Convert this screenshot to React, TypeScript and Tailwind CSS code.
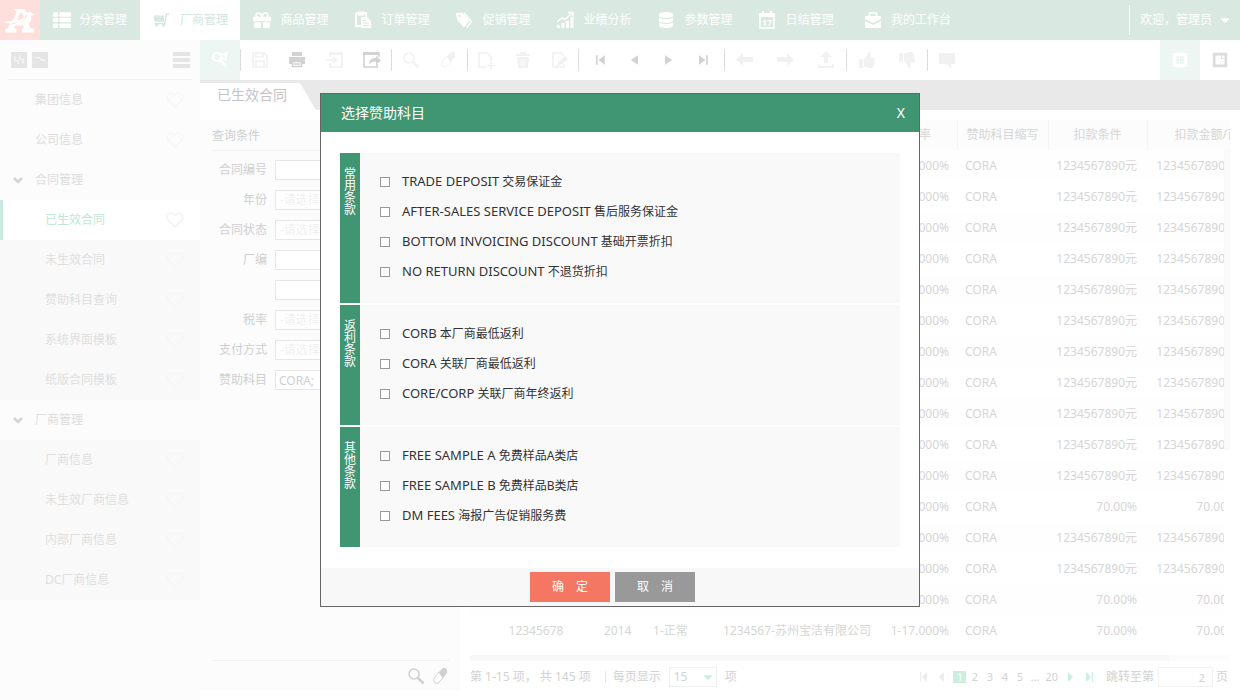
import type { ReactNode } from "react";
import { FaCaretDown, FaDatabase, FaGift, FaThList, FaThumbsDown, FaThumbsUp } from "react-icons/fa";
import { FiHeart } from "react-icons/fi";

const Svg = ({ size = "size-5", children }: { size?: string; children: ReactNode }) => (
  <svg viewBox="0 0 20 20" className={`${size} shrink-0`} fill="currentColor" aria-hidden="true">
    {children}
  </svg>
);

const Bird = () => (
  <svg viewBox="0 0 32 28" className="h-7 w-8" aria-hidden="true">
    <path
      fill="#fff"
      d="M10 3h11l1.500 4 3.500-1 5 2.500-4 1.500c1 3 0 6-2.500 7.500l2.500 5h3v4h-12v-4h2l-1-3.500c-3 1-6 .5-8 .5l-1 3h2.500v4h-11v-4h2.500l2-5c-2 0-4-.5-5-2 3 .5 6 0 8.500-2l3.500-8.500h-2.500z"
    />
    <path fill="#ffdfdc" d="M16 7h2.500l1.500 4-2.500 2.500-4.500.5z" />
    <path d="M22 8c1 3-1 6-5 8.500M13 16c-2 1.500-4 2-6 2" fill="none" stroke="#ffdfdc" strokeWidth="1" />
  </svg>
);

const Cart = () => (
  <Svg size="size-[18px]">
    <path d="M2 5h11v7H3z" />
    <path d="M19 3.500h-3l-2 10.500H3" fill="none" stroke="currentColor" strokeWidth="1.500" />
    <path d="M4 6.500h7M5 10h5" stroke="#fff" strokeWidth=".6" />
    <circle cx="5" cy="15.500" r="1.700" />
    <circle cx="13" cy="15.500" r="1.700" />
  </Svg>
);
const Clipboard = () => (
  <Svg>
    <path d="M3 3h10v4M8 16H3V3" fill="none" stroke="currentColor" strokeWidth="2" />
    <path d="M5 1.500h6v4H5zM8 7h6l4 4v7H8z" />
    <path d="M10 10.500h3M10 13h6M10 15.500h6" stroke="#d9e9e2" strokeWidth="1" />
  </Svg>
);
const Tag = () => (
  <Svg>
    <path d="M2 3l6-.5 7.500 8-5.500 7L3 9.500z" />
    <path d="M10 3l7.500 8.500-5 6" fill="none" stroke="currentColor" strokeWidth="1.500" />
    <circle cx="5.500" cy="6" r="1.300" fill="#d9e9e2" />
  </Svg>
);
const Chart = () => (
  <Svg>
    <path d="M2 15h3v3H2zM6.500 13h3v5h-3zM11 11h3v7h-3zM15.500 7h3v11h-3z" />
    <path d="M2 12l5-4 3 1.500L17 3M13 2.500h5v4" fill="none" stroke="currentColor" strokeWidth="1.500" />
  </Svg>
);
const Calendar = () => (
  <Svg>
    <path d="M3 4h14v14H3z" fill="none" stroke="currentColor" strokeWidth="1.500" />
    <path d="M2 3h16v4H2zM5 1h2v3H5zM13 1h2v3h-2z" />
    <text x="10" y="16" textAnchor="middle" fontSize="9" fontWeight="700">17</text>
  </Svg>
);
const Briefcase = () => (
  <Svg>
    <path d="M6.500 6V3h7v3" fill="none" stroke="currentColor" strokeWidth="1.600" />
    <path d="M2 6h16v3l-8 4-8-4zM2 11l8 4 8-4v7H2z" />
  </Svg>
);

const navItems: { label: string; icon: ReactNode }[] = [
  { label: "商品管理", icon: <FaGift className="size-[18px]" /> },
  { label: "订单管理", icon: <Clipboard /> },
  { label: "促销管理", icon: <Tag /> },
  { label: "业绩分析", icon: <Chart /> },
  { label: "参数管理", icon: <FaDatabase className="size-4" /> },
  { label: "日结管理", icon: <Calendar /> },
];

const Line = ({ d }: { d: string }) => (
  <path d={d} fill="none" stroke="currentColor" strokeWidth="1.600" />
);
const Lens = () => (
  <Svg>
    <circle cx="8" cy="8" r="5" fill="none" stroke="currentColor" strokeWidth="1.500" />
    <path d="M11.500 11.500l6 6" stroke="currentColor" strokeWidth="2.500" />
  </Svg>
);
const Eraser = () => (
  <Svg>
    <path d="M9 6l4-4c3-.5 5 1 4 5l-4 5z" />
    <path d="M9 6l4 6-5 5c-3 1-5-1-4-5z" fill="none" stroke="currentColor" strokeWidth="1" />
  </Svg>
);

type Tool = { name: string; icon: ReactNode; strong?: boolean };
const groups: { box: string; tools: Tool[] }[] = [
  {
    box: "w-[150px]",
    tools: [
      { name: "保存", icon: <Svg><Line d="M3 3h11l3 3v11H3zM6 3v4h7V3M6 17v-6h8v6" /></Svg> },
      {
        name: "打印",
        strong: true,
        icon: (
          <Svg>
            <path d="M5 2h10v4H5zM2 7h16v7h-3v-3H5v3H2z" />
            <Line d="M5.500 11.500h9v5h-9zM7 14h6" />
          </Svg>
        ),
      },
      { name: "导入", icon: <Svg><Line d="M5 7V3h12v14H5v-4M1 10h10M8 7l3 3-3 3" /><path d="M5 2h12v3H5z" /></Svg> },
      {
        name: "导出",
        strong: true,
        icon: (
          <Svg>
            <Line d="M15 14v3H2V3h15v4" />
            <path d="M1 2h16v3H1zM7 14c0-4 3-6 7-6V6l5 4.500-5 4v-3c-3 0-5 .5-7 2.500z" />
          </Svg>
        ),
      },
    ],
  },
  { box: "w-[75px]", tools: [{ name: "查找", icon: <Lens /> }, { name: "清除", icon: <Eraser /> }] },
  {
    box: "w-[110px]",
    tools: [
      { name: "新增", icon: <Svg><Line d="M11 17H3V3h8l4 4v4M15 12v7M11.500 15.500h7" /></Svg> },
      { name: "删除", icon: <Svg><path d="M3 4h14v2H3zM7 2h6v2H7zM4 7h12l-1 11H5z" /><path d="M8 9v7M10 9v7M12 9v7" stroke="#fff" strokeWidth=".8" /></Svg> },
      { name: "编辑", icon: <Svg><Line d="M14 14v3H3V3h8l3 3" /><path d="M8 12l7-6 3 3-7 6-4 1z" /></Svg> },
    ],
  },
  {
    box: "w-[145px] px-1",
    tools: [
      { name: "首条", strong: true, icon: <Svg size="size-4"><path d="M5 4h2v12H5zM16 4v12l-8-6z" /></Svg> },
      { name: "上一条", strong: true, icon: <Svg size="size-4"><path d="M15 4v12l-9-6z" /></Svg> },
      { name: "下一条", strong: true, icon: <Svg size="size-4"><path d="M5 4v12l9-6z" /></Svg> },
      { name: "末条", strong: true, icon: <Svg size="size-4"><path d="M14 4h2v12h-2zM5 4v12l8-6z" /></Svg> },
    ],
  },
  {
    box: "w-[121px]",
    tools: [
      { name: "后退", icon: <Svg><path d="M1 9.500l7-6v3.500h10v5H8v3.500z" /></Svg> },
      { name: "前进", icon: <Svg><path d="M19 9.500l-7-6v3.500H2v5h10v3.500z" /></Svg> },
      { name: "上传", icon: <Svg><path d="M10 1l6 6h-4v6H8V7H4zM2 14h2v2h12v-2h2v4H2z" /></Svg> },
    ],
  },
  {
    box: "w-[80px]",
    tools: [
      { name: "同意", icon: <FaThumbsUp className="size-4" /> },
      { name: "反对", icon: <FaThumbsDown className="size-4" /> },
    ],
  },
  { box: "w-[38px]", tools: [{ name: "评论", icon: <Svg><path d="M2 3h16v11h-4v4l-5-4H2z" /></Svg> }] },
];

const Chevron = () => (
  <svg viewBox="0 0 12 8" className="h-2 w-3" aria-hidden="true">
    <path d="M2 2l4 4 4-4" fill="none" stroke="#d4d4d4" strokeWidth="2.500" />
  </svg>
);

const MenuLink = ({ label }: { label: string }) => (
  <a href="#" className="flex h-10 items-center justify-between pr-4 pl-[35px] text-[#dcdcdc]">
    {label}
    <FiHeart className="size-[18px] text-[#f7f7f7]" />
  </a>
);
const SubLink = ({ label, active }: { label: string; active?: boolean }) => (
  <a
    href="#"
    className={
      active
        ? "flex h-10 items-center justify-between border-l-[3px] border-[#c9ebde] bg-white pr-4 pl-[42px] text-[#bfe6d7]"
        : "flex h-10 items-center justify-between pr-4 pl-[45px] text-[#dfdfdf]"
    }
  >
    {label}
    <FiHeart className={active ? "size-[18px] text-[#f2f2f2]" : "size-[18px] text-[#f6f6f6]"} />
  </a>
);
const Fold = ({ label }: { label: string }) => (
  <button type="button" className="flex h-10 w-full items-center gap-[11px] pl-3 text-[#dcdcdc]">
    <Chevron />
    {label}
  </button>
);

const fields: { id: string; label: string; kind: "text" | "select"; value?: string }[] = [
  { id: "no", label: "合同编号", kind: "text" },
  { id: "year", label: "年份", kind: "select" },
  { id: "state", label: "合同状态", kind: "select" },
  { id: "vendor", label: "厂编", kind: "text" },
  { id: "vendorName", label: "", kind: "text" },
  { id: "tax", label: "税率", kind: "select" },
  { id: "pay", label: "支付方式", kind: "select" },
  { id: "subject", label: "赞助科目", kind: "text", value: "CORA;" },
];

const amounts = Array.from({ length: 16 }, (_, i) => (i === 11 || i > 13 ? "70.00%" : "1234567890元"));

const sections = [
  {
    title: "常用条款",
    items: [
      ["TRADE DEPOSIT", "交易保证金"],
      ["AFTER-SALES SERVICE DEPOSIT", "售后服务保证金"],
      ["BOTTOM INVOICING DISCOUNT", "基础开票折扣"],
      ["NO RETURN DISCOUNT", "不退货折扣"],
    ],
  },
  {
    title: "返利条款",
    items: [
      ["CORB", "本厂商最低返利"],
      ["CORA", "关联厂商最低返利"],
      ["CORE/CORP", "关联厂商年终返利"],
    ],
  },
  {
    title: "其他条款",
    items: [
      ["FREE SAMPLE A", "免费样品A类店"],
      ["FREE SAMPLE B", "免费样品B类店"],
      ["DM FEES", "海报广告促销服务费"],
    ],
  },
];

const th = "border-r border-[#f4f4f4] font-normal";

function Header() {
  return (
    <header className="flex h-10 bg-[#d9e9e2] text-white">
      <a href="#" aria-label="首页" className="flex w-10 items-center justify-center bg-[#ffdfdc]">
        <Bird />
      </a>
      <nav className="flex">
        <a href="#" className="flex w-[100px] items-center justify-center gap-2">
          <FaThList className="size-[18px]" />
          分类管理
        </a>
        <a href="#" className="flex w-[100px] items-center justify-center gap-2.5 bg-white text-[#d3e5dd]">
          <Cart />
          厂商管理
        </a>
        {navItems.map((n) => (
          <a key={n.label} href="#" className="flex w-[101px] items-center justify-center gap-2">
            <span className="flex w-5 justify-center">{n.icon}</span>
            {n.label}
          </a>
        ))}
        <a href="#" className="flex w-[122px] items-center justify-center gap-2">
          <Briefcase />
          我的工作台
        </a>
      </nav>
      <div className="ml-auto flex items-center pr-2">
        <span className="mr-2.5 h-[30px] border-l border-white" />
        <button type="button" className="flex items-center gap-1.5">
          欢迎，管理员
          <FaCaretDown className="size-3.5" />
        </button>
      </div>
    </header>
  );
}

function Sidebar() {
  return (
    <aside className="w-[200px] shrink-0 bg-[#fcfcfc]">
      <div className="mx-2 flex h-10 items-center border-b border-[#f2f2f2] pr-0.5 pl-[3px]">
        <button type="button" aria-label="展开" className="mr-[5px] size-4 bg-[#e5e5e5] text-[#f5f5f5]">
          <Svg size="size-4"><Line d="M5 5v6h4v4M11 4v5h4v6" /></Svg>
        </button>
        <button type="button" aria-label="收起" className="size-4 bg-[#e5e5e5] text-[#f5f5f5]">
          <Svg size="size-4"><Line d="M4 7h5l3 3h4" /></Svg>
        </button>
        <button type="button" aria-label="菜单" className="ml-auto text-[#e5e5e5]">
          <svg viewBox="0 0 17 16" className="h-4 w-[17px]" fill="currentColor">
            <path d="M0 0h17v4H0zM0 6h17v4H0zM0 12h17v4H0z" />
          </svg>
        </button>
      </div>
      <MenuLink label="集团信息" />
      <MenuLink label="公司信息" />
      <Fold label="合同管理" />
      <div className="bg-[#f9f9f9]">
        <SubLink label="已生效合同" active />
        <SubLink label="未生效合同" />
        <SubLink label="赞助科目查询" />
        <SubLink label="系统界面模板" />
        <SubLink label="纸版合同模板" />
      </div>
      <Fold label="厂商管理" />
      <div className="bg-[#f9f9f9]">
        <SubLink label="厂商信息" />
        <SubLink label="未生效厂商信息" />
        <SubLink label="内部厂商信息" />
        <SubLink label="DC厂商信息" />
      </div>
    </aside>
  );
}

function Toolbar() {
  return (
    <div className="flex h-10 items-center bg-white">
      <button type="button" aria-label="查询" className="flex h-10 w-10 items-center justify-center bg-[#edf6f3] text-white">
        <Svg>
          <circle cx="7" cy="7" r="4" fill="none" stroke="currentColor" strokeWidth="2" />
          <path d="M10 10l6 6" stroke="currentColor" strokeWidth="3" />
          <path d="M12 4l5-1-1 4zM12 8l5 2" stroke="currentColor" strokeWidth="1.500" />
        </Svg>
      </button>
      {groups.map((g) => (
        <div key={g.tools[0].name} className="flex items-center">
          <span className="h-[22px] border-l border-[#dcdcdc]" />
          <div className={`flex ${g.box}`}>
            {g.tools.map((t) => (
              <button
                key={t.name}
                type="button"
                aria-label={t.name}
                className={t.strong ? "flex flex-1 justify-center text-[#d2d2d2]" : "flex flex-1 justify-center text-[#f1f1f1]"}
              >
                {t.icon}
              </button>
            ))}
          </div>
        </div>
      ))}
      <button type="button" aria-label="列表视图" className="ml-auto flex h-10 w-10 items-center justify-center bg-[#edf6f3]">
        <Svg size="size-[18px]">
          <rect x="2" y="2" width="16" height="16" rx="2" fill="#fff" />
          <path d="M6 6h3v2H6zM10 6h4v2h-4zM6 9h3v2H6zM10 9h4v2h-4zM6 12h3v2H6zM10 12h4v2h-4z" fill="#e3f2ec" />
        </Svg>
      </button>
      <button type="button" aria-label="窗口视图" className="flex h-10 w-10 items-center justify-center text-[#dcdcdc]">
        <Svg size="size-[18px]">
          <path fillRule="evenodd" d="M2 2h16v16H2zM5 5v10h10V9h-4V5z" />
          <path d="M12 5h3v3h-3z" fill="#fff" />
        </Svg>
      </button>
    </div>
  );
}

function QueryPanel() {
  return (
    <form className="flex w-[260px] shrink-0 flex-col bg-[#fcfcfc] pr-2.5 pl-3 text-[#cfcfcf]">
      <h2 className="h-[31px] border-b border-[#f2f2f2] leading-8">查询条件</h2>
      <div className="mt-[9px] flex flex-col gap-2.5">
        {fields.map((f) => (
          <div key={f.id} className="flex h-5 items-center gap-2">
            <label htmlFor={f.id} className="w-[55px] text-right">
              {f.label}
            </label>
            {f.kind === "text" ? (
              <input
                id={f.id}
                aria-label={f.label || "厂商名称"}
                defaultValue={f.value}
                className="h-5 min-w-0 flex-1 border border-[#e6e6e6] bg-white px-[3px]"
              />
            ) : (
              <select id={f.id} className="h-5 min-w-0 flex-1 appearance-none border border-[#e6e6e6] bg-white px-1 text-[#f0f0f0]">
                <option>-请选择-</option>
              </select>
            )}
          </div>
        ))}
      </div>
      <div className="mt-auto flex h-[30px] items-center justify-end gap-1 border-t border-[#f2f2f2] text-[#d0d0d0]">
        <button type="button" aria-label="查询"><Lens /></button>
        <button type="button" aria-label="清空"><Eraser /></button>
      </div>
    </form>
  );
}

function ContractTable() {
  return (
    <div className="relative overflow-hidden">
      <table className="w-full min-w-[777px] table-fixed whitespace-nowrap text-[#d6d6d6]">
        <thead>
          <tr className="h-[30px] bg-[#fcfcfc]">
            <th className="w-[30px] font-normal" />
            <th className={`w-[96px] ${th}`}>合同编号</th>
            <th className={`w-[49px] ${th}`}>年份</th>
            <th className={`w-[70px] ${th}`}>合同状态</th>
            <th className={`w-[166px] ${th}`}>厂商</th>
            <th className={`w-[76px] ${th}`}>税率</th>
            <th className={`w-[91px] ${th}`}>赞助科目缩写</th>
            <th className={`w-[99px] ${th}`}>扣款条件</th>
            <th className="w-[100px] overflow-hidden pl-[27px] text-left font-normal">扣款金额/百分比</th>
          </tr>
        </thead>
        <tbody>
          {amounts.map((a, i) => (
            <tr key={i} className="h-[31px] odd:bg-[#fefefe]">
              <td />
              <td className="pr-6 text-center">12345678</td>
              <td className="pl-2 text-left">2014</td>
              <td className="pl-2 text-left">1-正常</td>
              <td className="pl-2 text-left">1234567-苏州宝洁有限公司</td>
              <td className="pr-2 text-right">1-17.000%</td>
              <td className="pl-2 text-left">CORA</td>
              <td className="pr-2.5 text-right">{a}</td>
              <td className="pr-2.5 text-right">{a}</td>
            </tr>
          ))}
        </tbody>
      </table>
      <div className="absolute top-[30px] right-0 bottom-0 w-[6px] bg-white">
        <div className="h-[300px] bg-[#fafafa]" />
      </div>
    </div>
  );
}

const Arrow = ({ d }: { d: string }) => (
  <svg viewBox="0 0 10 10" className="size-2.5" fill="currentColor" aria-hidden="true">
    <path d={d} />
  </svg>
);

function Pager() {
  return (
    <div className="flex h-5 items-center whitespace-nowrap text-[#d2d2d2]">
      <span className="mr-3.5">第 1-15 项， 共 145 项</span>
      <span className="mr-[7px] h-3 border-l border-[#e6e6e6]" />
      <label htmlFor="size" className="mr-2">每页显示</label>
      <span className="relative mr-2 flex">
        <select id="size" className="h-5 w-[48px] appearance-none border border-[#f0f0f0] bg-white px-1">
          <option>15</option>
        </select>
        <FaCaretDown className="pointer-events-none absolute top-[3px] right-[2px] size-3.5 text-[#cceee0]" />
      </span>
      <span>项</span>
      <div className="ml-auto flex items-center pr-0.5">
        <button type="button" aria-label="首页" className="mr-2 text-[#ececec]"><Arrow d="M1 0h1v10H1zM8 0v10L3 5z" /></button>
        <button type="button" aria-label="上一页" className="mr-1.5 text-[#ececec]"><Arrow d="M7 0v10L2 5z" /></button>
        <button type="button" className="h-3 w-[13px] bg-[#cceee0] text-[11px] leading-3 text-white">1</button>
        {["2", "3", "4", "5", "..."].map((p) => (
          <button key={p} type="button" className="ml-0.5 w-[13px] text-center text-[11px]">{p}</button>
        ))}
        <button type="button" className="mr-2 ml-1 text-[11px]">20</button>
        <button type="button" aria-label="下一页" className="mr-2 text-[#cceee0]"><Arrow d="M2 0v10l5-5z" /></button>
        <button type="button" aria-label="末页" className="mr-3 text-[#cceee0]"><Arrow d="M8 0h1v10H8zM2 0v10l5-5z" /></button>
        <label htmlFor="jump" className="mr-1">跳转至第</label>
        <input id="jump" defaultValue="2" className="mr-[3px] h-5 w-[55px] border border-[#f2f2f2] bg-white px-[7px] text-right text-[11px]" />
        <span>页</span>
      </div>
    </div>
  );
}

function SubjectDialog() {
  return (
    <div className="fixed inset-0 flex items-center justify-center">
      <div role="dialog" aria-labelledby="dialog-title" className="w-[600px] border border-[#666] bg-white text-[#333]">
        <div className="flex h-[38px] items-center justify-between bg-[#409573] pr-3.5 pl-5 text-sm text-white">
          <h1 id="dialog-title">选择赞助科目</h1>
          <button type="button" aria-label="关闭">X</button>
        </div>
        <div className="flex flex-col gap-0.5 px-[19px] py-[21px]">
          {sections.map((s) => (
            <div key={s.title} role="group" aria-label={s.title} className="flex bg-[#f9f9f9]">
              <div className="w-5 bg-[#409573] px-1 pt-[15px] leading-3 break-all text-white">{s.title}</div>
              <div className="pt-3.5 pb-4 pl-5">
                {s.items.map(([code, name]) => (
                  <label key={code} className="flex h-[30px] items-center">
                    <input type="checkbox" className="mr-3 size-2.5 appearance-none border border-[#999] bg-white checked:bg-[#409573]" />
                    <span>
                      <span className="text-[13px]">{code}</span> {name}
                    </span>
                  </label>
                ))}
              </div>
            </div>
          ))}
        </div>
        <div className="flex h-[38px] justify-center gap-[5px] bg-[#f8f8f8] pt-1 pr-[15px] text-white">
          <button type="button" className="h-[30px] w-20 bg-[#f37762]">确　定</button>
          <button type="button" className="h-[30px] w-20 bg-[#999]">取　消</button>
        </div>
      </div>
    </div>
  );
}

export default function App() {
  return (
    <div className="flex min-h-screen flex-col bg-white font-['Noto_Sans','Noto_Sans_CJK_SC',sans-serif] text-xs">
      <Header />
      <div className="flex flex-1">
        <Sidebar />
        <main className="flex min-w-0 flex-1 flex-col">
          <Toolbar />
          <div className="flex h-[30px] items-end bg-[#e9e9e9]">
            <div className="h-[27px] w-[116px] bg-white pl-[17px] text-sm leading-6 text-[#c4c4c4] [clip-path:polygon(0_0,100px_0,100%_100%,0_100%)]">
              已生效合同
            </div>
          </div>
          <div className="flex flex-1 gap-2.5 py-2.5 pr-2.5">
            <QueryPanel />
            <section className="flex min-w-0 flex-1 flex-col">
              <ContractTable />
              <div className="mt-[9px] mb-1.5 h-1.5 bg-[#fcfcfc]">
                <div className="h-1.5 w-[92%] bg-[#f8f8f8]" />
              </div>
              <Pager />
            </section>
          </div>
        </main>
      </div>
      <SubjectDialog />
    </div>
  );
}
